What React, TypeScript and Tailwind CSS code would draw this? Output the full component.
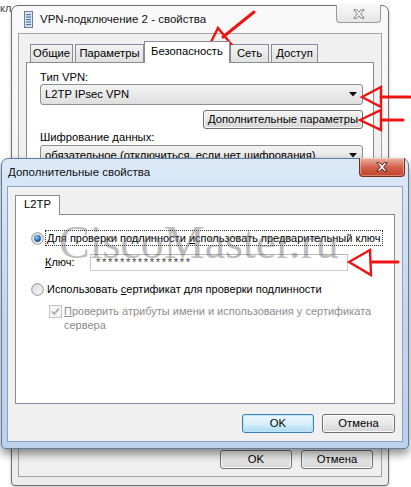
import React from "react";

function RadioIcon({ checked, id }: { checked: boolean; id: string }) {
  return (
    <svg width="13" height="13" viewBox="0 0 13 13" className="shrink-0">
      <defs>
        <linearGradient id={id + "bg"} x1="0" y1="0" x2="1" y2="1">
          <stop offset="0" stopColor="#d8d8d8" />
          <stop offset="1" stopColor="#ffffff" />
        </linearGradient>
        <radialGradient id={id + "dot"} cx="0.4" cy="0.35" r="0.7">
          <stop offset="0" stopColor="#a9dcff" />
          <stop offset="0.5" stopColor="#2f83c8" />
          <stop offset="1" stopColor="#0d3f73" />
        </radialGradient>
      </defs>
      <circle cx="6.5" cy="6.5" r="5.8" fill={`url(#${id}bg)`} stroke="#8c8e90" strokeWidth="1" />
      <circle cx="6.5" cy="6.5" r="4.3" fill="none" stroke="#e8e8e8" strokeWidth="1" />
      {checked && <circle cx="6.5" cy="6.5" r="3.4" fill={`url(#${id}dot)`} />}
    </svg>
  );
}

function CloseGlyph({ active }: { active: boolean }) {
  return (
    <svg width="12" height="10" viewBox="0 0 12 10">
      <path
        d="M0.8,0.8 L3.8,0.8 L6,3.2 L8.2,0.8 L11.2,0.8 L7.6,5 L11.2,9.2 L8.2,9.2 L6,6.8 L3.8,9.2 L0.8,9.2 L4.4,5 Z"
        fill="#ffffff"
        stroke={active ? "#4f1c14" : "#7b7b7b"}
        strokeWidth="1"
        strokeLinejoin="round"
      />
    </svg>
  );
}

function ComboArrow() {
  return (
    <svg width="8" height="5" viewBox="0 0 8 5">
      <path d="M0,0 L8,0 L4,4.5 Z" fill="#111" />
    </svg>
  );
}

function Btn({ label, def, w }: { label: string; def?: boolean; w: string }) {
  return (
    <div
      className={
        "h-[19px] rounded-[3px] border flex items-center justify-center text-[11.25px] leading-none " +
        w +
        " " +
        (def
          ? "border-[#3c7fb1] bg-gradient-to-b from-[#eaf6fd] via-[#d9f0fc] to-[#a7d9f5] shadow-[inset_0_0_0_1px_#bfe5fa]"
          : "border-[#707070] bg-gradient-to-b from-[#f3f3f3] via-[#e8e8e8] to-[#d4d4d4] shadow-[inset_0_0_0_1px_#fbfbfb]")
      }
    >
      <span>{label}</span>
    </div>
  );
}

function Tab({ label, w, sel, extra }: { label: string; w: string; sel?: boolean; extra?: string }) {
  return (
    <div
      className={
        "flex items-center justify-center border border-b-0 border-[#898c95] text-[11.25px] leading-none " +
        w +
        " " +
        (sel
          ? "h-[22px] bg-white relative z-10 -mb-px pb-[2px]"
          : "h-[18px] bg-gradient-to-b from-[#f2f2f2] to-[#e1e1e1]") +
        " " +
        (extra ?? "")
      }
    >
      <span>{label}</span>
    </div>
  );
}

export default function App() {
  return (
    <div className="relative w-[411px] h-[487px] overflow-hidden bg-white text-black font-['Liberation_Sans',Arial,sans-serif] text-[11.25px]">
      {/* background text fragment */}
      <div className="absolute left-0 top-[3px] text-[11px] text-[#444] leading-none">кл</div>

      {/* Outer window */}
      <div className="absolute left-[11px] top-[5px] w-[378px] h-[481px] rounded-t-[7px] rounded-b-[4px] border border-[#6f6f6f] bg-gradient-to-b from-[#f9f9f9] to-[#ececec] flex flex-col px-[6px] pb-[8px] shadow-[0_1px_3px_rgba(0,0,0,0.25)]">
        <div className="relative h-[27px] shrink-0 flex items-center gap-[7px] pl-[6px]">
          <svg width="9" height="17" viewBox="0 0 9 17" className="shrink-0">
            <rect x="0.5" y="0.5" width="8" height="16" fill="#dfe6ef" stroke="#6d7d93" />
            <rect x="2" y="3" width="5" height="1.2" fill="#4f78b0" />
            <rect x="2" y="5.5" width="5" height="1.2" fill="#4f78b0" />
            <rect x="2" y="8" width="5" height="1.2" fill="#4f78b0" />
            <rect x="2" y="10.5" width="5" height="1.2" fill="#4f78b0" />
            <rect x="2" y="13" width="5" height="1.2" fill="#4f78b0" />
          </svg>
          <span className="text-[11.5px] leading-none text-[#111] whitespace-nowrap">VPN-подключение 2 - свойства</span>
          <div className="absolute right-[1px] top-[-1px] w-[45px] h-[18px] rounded-b-[4px] border border-t-0 border-[#9a9a9a] bg-gradient-to-b from-[#f8f8f8] to-[#e6e6e6] flex items-center justify-center">
            <CloseGlyph active={false} />
          </div>
        </div>
        <div className="flex-1 flex flex-col border border-[#a3a3a3] bg-[#f0f0f0] pt-[7px] px-[7px]">
          <div className="flex items-end h-[21px] pl-[4px]">
            <Tab label="Общие" w="w-[43px]" extra="mr-[2px]" />
            <Tab label="Параметры" w="w-[69px]" />
            <Tab label="Безопасность" w="w-[86px]" sel />
            <Tab label="Сеть" w="w-[39px]" extra="mr-[2px]" />
            <Tab label="Доступ" w="w-[47px]" />
          </div>
          <div className="h-[375px] border border-[#898c95] bg-white flex flex-col pl-[13px] pr-[10px] pt-[7px]">
            <div className="h-[14px] leading-[14px]">Тип VPN:</div>
            <div className="h-[21px] rounded-[3px] border border-[#8e8f8f] bg-gradient-to-b from-[#f4f4f4] to-[#dedede] flex items-center justify-between pl-[4px] pr-[5px]">
              <span>L2TP IPsec VPN</span>
              <ComboArrow />
            </div>
            <div className="mt-[5px] self-end w-[160px] h-[19px] rounded-[3px] border border-[#707070] bg-gradient-to-b from-[#f3f3f3] via-[#e8e8e8] to-[#d4d4d4] shadow-[inset_0_0_0_1px_#fbfbfb] flex items-center justify-center leading-none">
              <span>Дополнительные параметры</span>
            </div>
            <div className="mt-[1px] h-[14px] leading-[14px]">Шифрование данных:</div>
            <div className="mt-[1px] h-[21px] rounded-[3px] border border-[#8e8f8f] bg-gradient-to-b from-[#f4f4f4] to-[#dedede] flex items-center justify-between pl-[4px] pr-[5px]">
              <span>обязательное (отключиться, если нет шифрования)</span>
              <ComboArrow />
            </div>
          </div>
          <div className="mt-auto mb-[7px] flex justify-end gap-[9px] pr-[1px]">
            <Btn label="OK" w="w-[72px]" />
            <Btn label="Отмена" w="w-[72px]" />
          </div>
        </div>
      </div>

      {/* Second dialog */}
      <div className="absolute left-[1px] top-[158px] w-[408px] h-[291px] rounded-t-[7px] rounded-b-[4px] border border-[#5e7da0] bg-gradient-to-b from-[#dbe9f7] via-[#c3d8ef] to-[#b9d1ea] flex flex-col px-[5px] pb-[6px] shadow-[0_5px_10px_rgba(0,0,0,0.45)]">
        <div className="relative h-[27px] shrink-0 flex items-center pl-[1px]">
          <span className="text-[11.5px] leading-none text-[#111] whitespace-nowrap">Дополнительные свойства</span>
          <div className="absolute right-[-2px] top-[-1px] w-[46px] h-[19px] rounded-b-[4px] border border-t-0 border-[#7b2a1c] bg-gradient-to-b from-[#eab3a6] via-[#d4634d] to-[#c2412a] shadow-[inset_0_0_0_1px_rgba(255,255,255,0.35)] flex items-center justify-center">
            <CloseGlyph active />
          </div>
        </div>
        <div className="flex-1 flex flex-col border border-[#8ba3bf] bg-[#f0f0f0] pt-[8px] px-[7px]">
          <div className="flex items-end h-[19px]">
            <Tab label="L2TP" w="w-[45px]" sel extra="!h-[20px]" />
          </div>
          <div className="h-[190px] border border-[#898c95] bg-white flex flex-col pl-[15px] pr-[9px] pt-[15px] text-[11px]">
            <div className="flex items-center h-[16px]">
              <RadioIcon checked id="r1" />
              <div className="ml-[1px] h-[16px] px-[1px] border border-dotted border-[#333] flex items-center leading-none whitespace-nowrap">
                <span>
                  Для проверки подлинности <span className="underline">и</span>спользовать предварительный ключ
                </span>
              </div>
            </div>
            <div className="mt-[8px] flex items-center h-[16px] pl-[14px]">
              <span className="w-[45px] leading-none">
                <span className="underline">К</span>люч:
              </span>
              <div className="w-[258px] h-[17px] border border-[#c9cbd0] border-t-[#b3b5ba] bg-white flex items-center pl-[5px] text-[#444] tracking-[1.7px] leading-none">
                <span>****************</span>
              </div>
            </div>
            <div className="mt-[11px] flex items-center h-[16px]">
              <RadioIcon checked={false} id="r2" />
              <span className="ml-[3px] leading-none whitespace-nowrap">
                Использовать <span className="underline">с</span>ертификат для проверки подлинности
              </span>
            </div>
            <div className="mt-[7px] flex items-start pl-[18px]">
              <svg width="13" height="13" viewBox="0 0 13 13" className="shrink-0 mt-[1px]">
                <rect x="0.5" y="0.5" width="12" height="12" fill="#f4f4f4" stroke="#c4c4c4" />
                <path d="M3,6.5 L5.3,9 L10,3.5" fill="none" stroke="#a6a6a6" strokeWidth="1.6" />
              </svg>
              <div className="ml-[2px] text-[#8d8d8d] leading-[14px] whitespace-nowrap">
                <div>
                  <span className="underline">П</span>роверить атрибуты имени и использования у сертификата
                </div>
                <div>сервера</div>
              </div>
            </div>
          </div>
          <div className="mt-auto mb-[8px] flex justify-end gap-[8px]">
            <Btn label="OK" w="w-[72px]" def />
            <Btn label="Отмена" w="w-[73px]" />
          </div>
        </div>
      </div>

      {/* Watermark */}
      <div className="absolute left-[59px] top-[220px] pointer-events-none select-none font-['Liberation_Serif',serif] text-[46px] leading-none text-[#6e6e6e] opacity-45 whitespace-nowrap">
        CiscoMaster.ru
      </div>

      {/* Red arrows */}
      <svg className="absolute left-0 top-0 pointer-events-none" width="411" height="487" viewBox="0 0 411 487">
        <g fill="none" stroke="#ee1414" strokeLinejoin="miter" strokeLinecap="round">
          <path d="M254,12 L223,37" strokeWidth="3" />
          <path d="M208,48 L218,28 L231,44 Z" strokeWidth="2.4" />
          <path d="M381,97 L410,97" strokeWidth="3" />
          <path d="M362,97 L381,87 L381,107 Z" strokeWidth="2.4" />
          <path d="M381,120 L403,120" strokeWidth="3" />
          <path d="M360,120 L381,110 L381,130 Z" strokeWidth="2.4" />
          <path d="M371,262 L398,262" strokeWidth="3" />
          <path d="M349,262 L370,250 L371,275 Z" strokeWidth="2.4" />
        </g>
      </svg>
    </div>
  );
}
